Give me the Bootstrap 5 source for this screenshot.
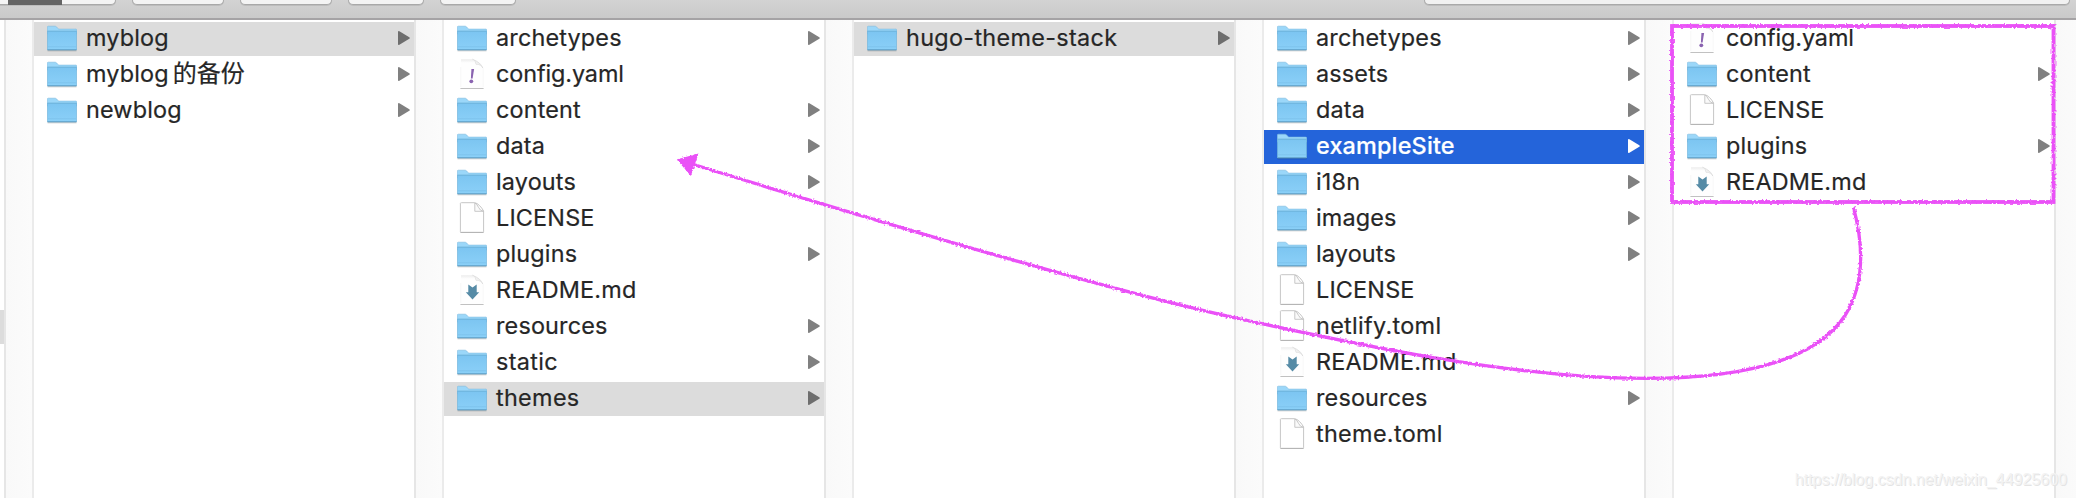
<!DOCTYPE html>
<html lang="zh">
<head>
<meta charset="utf-8">
<title>myblog</title>
<link href="https://cdn.jsdelivr.net/npm/bootstrap@5.3.0/dist/css/bootstrap.min.css" rel="stylesheet">
<style>
body{width:2076px;height:498px;font-family:Inter,"Noto Sans CJK SC",sans-serif;font-size:23.4px;color:#262626;background:#fff}
.toolbar{height:20px;background:linear-gradient(#d3d3d3,#cacaca);border-bottom:2px solid #a5a3a5;padding-left:0}
.tool{height:5px;background:#f4f4f4;border:1px solid #a9a9a9;border-top:0;border-radius:0 0 7px 7px;box-shadow:0 1px 0 #bdbdbd}
.seg{border-radius:0 0 7px 0;border-left:0;width:116px;margin-right:16px;padding-left:8px}
.seg-on{width:54px;height:5px;background:#646464}
.w92{width:92px;margin-right:16px}.w76{width:76px;margin-right:16px}
.search{width:646px;margin-right:6px;background:#f1f1f1}
.edge{width:4px;padding-top:290px}
.edge-sel{height:34px;background:#dcdcdc}
.gutter{width:30px;background:linear-gradient(90deg,#f9f9f9,#fbfbfb);border-left:2px solid #e6e6e6;border-right:2px solid #ebebeb}
.pane{width:380px;padding-top:2px;gap:2px}
.item{height:34px;padding:0 4px 0 13px;line-height:32px;white-space:nowrap}
.item .ico{width:30px;height:34px;margin-right:9px;flex:none}
.item .arr{width:12px;height:34px;fill:#808080;margin-left:auto;flex:none}
.item span{letter-spacing:.17px;-webkit-text-stroke:.2px}
.item .wide{letter-spacing:.32px}
.item .tight{letter-spacing:-.1px}
.item .han{font-size:24px;letter-spacing:0}
.sel{background:#dcdcdc}.sel .arr{fill:#6e6e6e}
.act{background:#2464da;color:#fff;font-weight:500}.act .arr{fill:#fff}
.marks{left:0;top:0;pointer-events:none}
.wm{right:9px;bottom:8px;font:16px/20px "Liberation Sans",Arial,sans-serif;color:#f3f3f3;text-shadow:1px 1px 0 #e4e4e4}
</style>
</head>
<body class="overflow-hidden position-relative d-flex flex-column">
<svg width="0" height="0" class="position-absolute" aria-hidden="true">
<defs>
<linearGradient id="fg" x1="0" y1="0" x2="0" y2="1"><stop offset="0" stop-color="#7cc5f1"/><stop offset="1" stop-color="#8bd0f8"/></linearGradient>
<linearGradient id="curl" x1="0" y1="1" x2="1" y2="0"><stop offset=".3" stop-color="#fff"/><stop offset="1" stop-color="#d0d0d0"/></linearGradient>
<linearGradient id="tg" x1="0" y1="0" x2="0" y2="1"><stop offset="0" stop-color="#ececec"/><stop offset="1" stop-color="#fff"/></linearGradient>
<symbol id="folder" viewBox="0 0 30 34">
<path d="M.5 28.7h29" stroke="#000" stroke-opacity=".22" stroke-width="1.2"/>
<path d="M.3 5.2Q.3 4.2 1.3 4.2H8Q9 4.2 9.7 5L11 6.6Q11.4 7.1 12.3 7.1H28.8Q29.7 7.1 29.7 8V12H.3Z" fill="#9bd7f9" stroke="#7dbbdf" stroke-width=".6"/>
<path d="M.3 9.3H29.7V27.4Q29.7 28 29 28H1Q.3 28 .3 27.4Z" fill="url(#fg)" stroke="#69acd4" stroke-width=".6"/>
<path d="M.5 9.2h29" stroke="#6fb5de" stroke-width=".8"/><path d="M1 24.8h28" stroke="#79bfea" stroke-width=".7"/><path d="M.5 27.6h29" stroke="#64a4ca" stroke-width=".9"/>
</symbol>
<symbol id="doc" viewBox="0 0 30 34">
<path d="M4.5.7H17.5Q20 1 22.5 3.5T26.6 9V29.7Q26.6 30.3 26 30.3H4Q3.4 30.3 3.4 29.7V1.3Q3.4.7 4.5.7Z" fill="#fff" stroke="#c6c6c6"/>
<path d="M17.8.9V9.3H26.4Q22.8 8.6 21.5 5.3Q20 2 17.8.9Z" fill="#fafafa" stroke="#c2c2c2" stroke-width=".9"/>
<path d="M3.5 30.5h23" stroke="#b5b5b5"/>
</symbol>
<symbol id="page" viewBox="0 0 30 34">
<path d="M4 1.2H15.5L26 9.5V30H4Z" fill="#fefefe"/>
<path d="M4 1.2H15.5L18 5H4Z" fill="url(#tg)"/>
<path d="M15.5 1.2Q18.8 2.2 19 6.3Q23.8 6 25.8 10Q24 4.5 15.5 1.2Z" fill="url(#curl)" stroke="#d6d6d6" stroke-width=".6"/>
<path d="M3.7 9V29M26.2 10V29" stroke="#f5f5f5" stroke-width=".7"/>
<path d="M3.4 30.5h23.2" stroke="#c1c1c1"/>
</symbol>
<symbol id="yaml" viewBox="0 0 30 34"><use href="#page"/>
<path d="M14.4 11.1H17.1L15.6 20.6H13.9Z" fill="#8a63b0"/><circle cx="14.3" cy="23.3" r="1.9" fill="#8a63b0"/></symbol>
<symbol id="md" viewBox="0 0 30 34"><use href="#page"/>
<path d="M11.3 10.6 15.5 13.4 19.7 10.6V18.3H22.2L15.5 25.4 8.8 18.3H11.3Z" fill="#568ba6"/></symbol>
<symbol id="tri" viewBox="0 0 12 34"><path d="M0 10Q0 8.6 1.4 9.2L11.3 15.2Q12.3 16 11.3 16.8L1.4 22.8Q0 23.4 0 22Z"/></symbol>
<filter id="chalk" filterUnits="userSpaceOnUse" x="600" y="0" width="1476" height="498" color-interpolation-filters="sRGB"><feTurbulence type="fractalNoise" baseFrequency=".5" numOctaves="2" seed="3"/><feDisplacementMap in="SourceGraphic" scale="3.2" xChannelSelector="R" yChannelSelector="G"/></filter>
</defs>
</svg>

<header class="toolbar d-flex align-items-start flex-shrink-0">
<div class="tool seg"><div class="seg-on"></div></div><div class="tool w92"></div><div class="tool w92"></div><div class="tool w76"></div><div class="tool w76"></div>
<div class="tool search ms-auto"></div>
</header>

<main class="d-flex flex-grow-1">
<div class="edge flex-shrink-0"><div class="edge-sel"></div></div>
<div class="gutter flex-shrink-0"></div>
<section class="pane d-flex flex-column flex-shrink-0">
<div class="item sel d-flex"><svg class="ico"><use href="#folder"/></svg><span>myblog</span><svg class="arr"><use href="#tri"/></svg></div>
<div class="item d-flex"><svg class="ico"><use href="#folder"/></svg><span>myblog<span class="han ms-1">的备份</span></span><svg class="arr"><use href="#tri"/></svg></div>
<div class="item d-flex"><svg class="ico"><use href="#folder"/></svg><span>newblog</span><svg class="arr"><use href="#tri"/></svg></div>
</section>
<div class="gutter flex-shrink-0"></div>
<section class="pane d-flex flex-column flex-shrink-0">
<div class="item d-flex"><svg class="ico"><use href="#folder"/></svg><span>archetypes</span><svg class="arr"><use href="#tri"/></svg></div>
<div class="item d-flex"><svg class="ico"><use href="#yaml"/></svg><span class="tight">config.yaml</span></div>
<div class="item d-flex"><svg class="ico"><use href="#folder"/></svg><span>content</span><svg class="arr"><use href="#tri"/></svg></div>
<div class="item d-flex"><svg class="ico"><use href="#folder"/></svg><span>data</span><svg class="arr"><use href="#tri"/></svg></div>
<div class="item d-flex"><svg class="ico"><use href="#folder"/></svg><span>layouts</span><svg class="arr"><use href="#tri"/></svg></div>
<div class="item d-flex"><svg class="ico"><use href="#doc"/></svg><span>LICENSE</span></div>
<div class="item d-flex"><svg class="ico"><use href="#folder"/></svg><span>plugins</span><svg class="arr"><use href="#tri"/></svg></div>
<div class="item d-flex"><svg class="ico"><use href="#md"/></svg><span>README.md</span></div>
<div class="item d-flex"><svg class="ico"><use href="#folder"/></svg><span>resources</span><svg class="arr"><use href="#tri"/></svg></div>
<div class="item d-flex"><svg class="ico"><use href="#folder"/></svg><span class="wide">static</span><svg class="arr"><use href="#tri"/></svg></div>
<div class="item sel d-flex"><svg class="ico"><use href="#folder"/></svg><span class="wide">themes</span><svg class="arr"><use href="#tri"/></svg></div>
</section>
<div class="gutter flex-shrink-0"></div>
<section class="pane d-flex flex-column flex-shrink-0">
<div class="item sel d-flex"><svg class="ico"><use href="#folder"/></svg><span class="wide">hugo-theme-stack</span><svg class="arr"><use href="#tri"/></svg></div>
</section>
<div class="gutter flex-shrink-0"></div>
<section class="pane d-flex flex-column flex-shrink-0">
<div class="item d-flex"><svg class="ico"><use href="#folder"/></svg><span>archetypes</span><svg class="arr"><use href="#tri"/></svg></div>
<div class="item d-flex"><svg class="ico"><use href="#folder"/></svg><span>assets</span><svg class="arr"><use href="#tri"/></svg></div>
<div class="item d-flex"><svg class="ico"><use href="#folder"/></svg><span>data</span><svg class="arr"><use href="#tri"/></svg></div>
<div class="item act d-flex"><svg class="ico"><use href="#folder"/></svg><span>exampleSite</span><svg class="arr"><use href="#tri"/></svg></div>
<div class="item d-flex"><svg class="ico"><use href="#folder"/></svg><span>i18n</span><svg class="arr"><use href="#tri"/></svg></div>
<div class="item d-flex"><svg class="ico"><use href="#folder"/></svg><span>images</span><svg class="arr"><use href="#tri"/></svg></div>
<div class="item d-flex"><svg class="ico"><use href="#folder"/></svg><span>layouts</span><svg class="arr"><use href="#tri"/></svg></div>
<div class="item d-flex"><svg class="ico"><use href="#doc"/></svg><span>LICENSE</span></div>
<div class="item d-flex"><svg class="ico"><use href="#doc"/></svg><span class="wide">netlify.toml</span></div>
<div class="item d-flex"><svg class="ico"><use href="#md"/></svg><span>README.md</span></div>
<div class="item d-flex"><svg class="ico"><use href="#folder"/></svg><span>resources</span><svg class="arr"><use href="#tri"/></svg></div>
<div class="item d-flex"><svg class="ico"><use href="#doc"/></svg><span class="wide">theme.toml</span></div>
</section>
<div class="gutter flex-shrink-0"></div>
<section class="pane d-flex flex-column flex-shrink-0">
<div class="item d-flex"><svg class="ico"><use href="#yaml"/></svg><span class="tight">config.yaml</span></div>
<div class="item d-flex"><svg class="ico"><use href="#folder"/></svg><span>content</span><svg class="arr"><use href="#tri"/></svg></div>
<div class="item d-flex"><svg class="ico"><use href="#doc"/></svg><span>LICENSE</span></div>
<div class="item d-flex"><svg class="ico"><use href="#folder"/></svg><span>plugins</span><svg class="arr"><use href="#tri"/></svg></div>
<div class="item d-flex"><svg class="ico"><use href="#md"/></svg><span>README.md</span></div>
</section>
<div class="gutter flex-shrink-0"></div>
</main>

<!-- hand-drawn annotation over the columns -->
<svg class="marks position-absolute" width="2076" height="498" fill="none" stroke="#ea51f7" stroke-width="3.8">
<g filter="url(#chalk)">
<rect x="1672" y="26" width="381.5" height="176"/>
<path stroke-width="3.3" d="M1853.5 207.5C1864 247 1865 284 1845 315.5C1815 362 1737 378.3 1645 378.3C1510 378.3 1350 343 1230 316.7C1090 286 860 216 692 164"/>
<path d="M678.5 160 697 155 690.5 174Z" fill="#ea51f7" stroke-width="2"/>
</g>
</svg>
<div class="wm position-absolute">https://blog.csdn.net/weixin_44925600</div>
<script src="https://cdn.jsdelivr.net/npm/bootstrap@5.3.0/dist/js/bootstrap.bundle.min.js"></script>
</body>
</html>
